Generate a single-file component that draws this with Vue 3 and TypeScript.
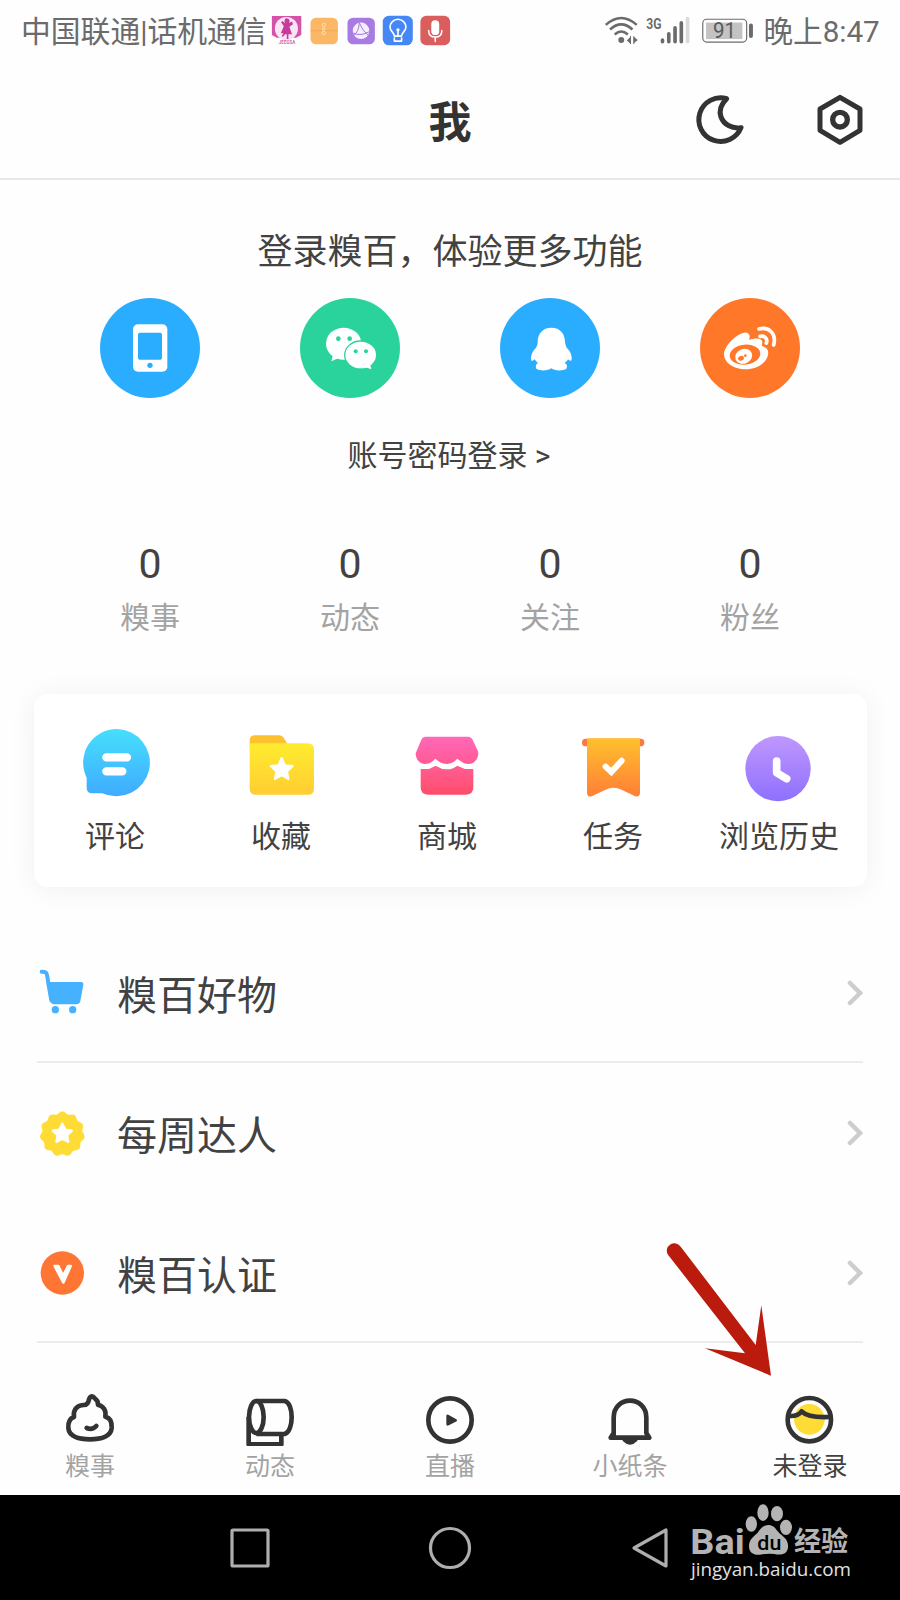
<script setup lang="ts">
interface Stat {
  label: string
  count: number
}

const stats: Stat[] = [
  { label: '糗事', count: 0 },
  { label: '动态', count: 0 },
  { label: '关注', count: 0 },
  { label: '粉丝', count: 0 },
]

// Five-pointed star centred on (cx, cy)
function star(cx: number, cy: number, outer: number, inner: number): string {
  return Array.from({ length: 10 }, (_, i) => {
    const r = i % 2 ? inner : outer
    const a = (Math.PI / 5) * i - Math.PI / 2
    return `${(cx + r * Math.cos(a)).toFixed(1)},${(cy + r * Math.sin(a)).toFixed(1)}`
  }).join(' ')
}

// Wavy-edged badge outline
function badge(cx: number, cy: number, radius: number, wave: number, lobes: number): string {
  return Array.from({ length: 180 }, (_, i) => {
    const a = (Math.PI / 90) * i
    const r = radius + wave * Math.cos(lobes * (a + Math.PI / 2))
    return `${(cx + r * Math.cos(a)).toFixed(1)},${(cy + r * Math.sin(a)).toFixed(1)}`
  }).join(' ')
}
</script>

<template>
  <main class="screen">
    <div class="status">
      <span class="carrier">中国联通|话机通信</span>
      <svg class="apps" viewBox="810 40 546 100">
        <path d="M813 46H902V104L886 112H828L813 104Z" fill="#d453a8" />
        <circle cx="857" cy="84" r="35" fill="#f9e4f4" />
        <path d="M857 53c9 0 12 9 8 14l9-4 3 8-11 8 8 22h-11v15h-5v-15h-5l-7 9-3-3 5-9h-8l9-21-8-12 4-4 9 7c-5-7-2-15 3-15z" fill="#c63c9c" />
        <text x="834" y="130" font-size="15" font-weight="700" fill="#d865b3" textLength="50" lengthAdjust="spacingAndGlyphs">JEEGSA</text>
        <rect x="930" y="51" width="83" height="81" rx="17" fill="#fbb765" />
        <path d="M930 91H1013" stroke="#e9a65a" stroke-width="2" />
        <g fill="none" stroke="#fde0b9" stroke-width="3"><circle cx="970" cy="73" r="5" /><circle cx="970" cy="85" r="4" /><circle cx="970" cy="97" r="5" /></g>
        <rect x="1042" y="51" width="83" height="81" rx="17" fill="#a87be4" />
        <circle cx="1083" cy="91" r="25" fill="#f5efff" />
        <g fill="none" stroke="#a078d6" stroke-width="3"><path d="M1059 98q24 10 48-4M1078 66q-2 28-16 38M1078 67q8 22 27 38" /></g>
        <rect x="1149" y="45" width="91" height="90" rx="19" fill="#4587f5" />
        <g fill="none" stroke="#fff" stroke-width="5" stroke-linecap="round" stroke-linejoin="round">
          <path d="M1184 107c0-10-13-15-13-27a24 24 0 0 1 48 0c0 12-13 17-13 27zM1184 113V122H1206V113M1195 105V91" />
        </g>
        <circle cx="1195" cy="88" r="5" fill="#fff" />
        <rect x="1263" y="45" width="90" height="90" rx="18" fill="#da5e5e" />
        <rect x="1296" y="59" width="24" height="45" rx="12" fill="#fff" />
        <path d="M1288 90q0 20 20 20t20-20M1308 110V123" fill="none" stroke="#fff" stroke-width="4.5" stroke-linecap="round" />
      </svg>
      <svg class="signals" viewBox="43 40 453 100">
        <g fill="none" stroke="#6b6b6b" stroke-width="7.500">
          <path d="M46 73q47-42 94 0M59 87q34-31 68 0M73 102q20-18 40 0" />
        </g>
        <circle cx="93" cy="119" r="9" fill="#6b6b6b" />
        <path d="M121 109v21l-11-10zM131 109l12 10-12 10z" fill="#6b6b6b" />
        <path d="M121 107v24M131 107v24" stroke="#6b6b6b" stroke-width="3" />
        <text x="169" y="84" font-size="46" font-weight="700" fill="#6b6b6b" textLength="46" lengthAdjust="spacingAndGlyphs">3G</text>
        <g stroke="#6b6b6b" stroke-width="11" stroke-linecap="round">
          <path d="M218 119V124M237 100V124M256 82V124M275 67V124" />
          <path d="M294 54V124" stroke="#dadada" />
        </g>
        <rect x="340" y="56" width="133" height="69" rx="12" fill="#fff" stroke="#6b6b6b" stroke-width="3.5" />
        <rect x="350" y="66" width="110" height="50" fill="#c3c3c3" />
        <text x="371" y="114" font-size="65" fill="#5b5b5b" textLength="70" lengthAdjust="spacingAndGlyphs">91</text>
        <rect x="480" y="69" width="12" height="44" rx="6" fill="#6b6b6b" />
      </svg>
      <span class="clock">晚上8:47</span>
    </div>

    <header class="header">
      <h1>我</h1>
      <div class="actions">
        <svg viewBox="309 279 162 162" fill="none" stroke="#333" stroke-width="15" stroke-linejoin="round">
          <path d="M410 296A65.500 65.500 0 1 0 453 383C427 387 402 375 393 351C386 332 394 312 410 296Z" />
        </svg>
        <svg viewBox="669 279 162 162" fill="none" stroke="#333" stroke-width="15" stroke-linejoin="round">
          <path d="M750 292L810 327V391L750 427L690 391V327Z" />
          <circle cx="750" cy="359" r="22" stroke-width="16" />
        </svg>
      </div>
    </header>

    <section class="login">
      <p class="invite">登录糗百，体验更多功能</p>
      <div class="providers">
        <svg viewBox="60 52 300 300">
          <circle cx="210" cy="202" r="150" fill="#2badff" />
          <rect x="159" y="131" width="103" height="142" rx="15" fill="#fff" />
          <rect x="174" y="156" width="72" height="81" rx="5" fill="#2badff" />
          <circle cx="210" cy="254" r="8" fill="#2badff" />
        </svg>
        <svg viewBox="660 52 300 300">
          <circle cx="810" cy="202" r="150" fill="#2bd39c" />
          <ellipse cx="791" cy="189" rx="53" ry="48" fill="#fff" />
          <path d="M759 223L754 242L778 231Z" fill="#fff" />
          <ellipse cx="842" cy="223" rx="50" ry="44" fill="#2bd39c" />
          <ellipse cx="842" cy="223" rx="46" ry="40" fill="#fff" />
          <path d="M852 258L874 266L869 246Z" fill="#fff" />
          <g fill="#2bd39c"><circle cx="775" cy="174" r="7" /><circle cx="809" cy="174" r="7" /><circle cx="827" cy="212" r="6" /><circle cx="858" cy="212" r="6" /></g>
        </svg>
        <svg viewBox="60 52 300 300">
          <circle cx="210" cy="202" r="150" fill="#2badff" />
          <path d="M214 141C187 141 173 160 173 184C173 192 171 196 168 201C157 212 152 225 153 236C154 243 159 241 164 236Q168 243 174 247C167 250 166 258 169 264C179 271 203 271 214 263C225 271 249 271 259 264C263 257 261 250 254 247Q261 243 264 236C270 242 275 242 275 235C276 223 270 210 260 201C258 197 256 192 255 184C255 160 241 141 214 141Z" fill="#fff" />
        </svg>
        <svg viewBox="660 52 300 300">
          <circle cx="810" cy="202" r="150" fill="#ff7829" />
          <path d="M732 221C732 196 768 160 793 156C808 154 812 166 807 178C825 172 846 171 847 185C847 192 844 196 848 197C860 200 867 209 864 223C859 248 829 266 796 266C760 266 732 246 732 221Z" fill="#fff" />
          <ellipse cx="795" cy="222" rx="46" ry="30" transform="rotate(-6 795 222)" fill="#ff7829" />
          <ellipse cx="791" cy="227" rx="26" ry="22" transform="rotate(-20 791 227)" fill="#fff" />
          <ellipse cx="783" cy="233" rx="9" ry="7" transform="rotate(-20 783 233)" fill="#ff7829" />
          <circle cx="796" cy="225" r="4" fill="#ff7829" />
          <path d="M837 145C868 137 890 160 881 193M840 167C854 164 864 174 859 187" fill="none" stroke="#fff" stroke-width="11" stroke-linecap="round" />
        </svg>
      </div>
      <a class="password">账号密码登录 &gt;</a>
    </section>

    <section class="stats">
      <div v-for="stat in stats" :key="stat.label" class="stat">
        <strong>{{ stat.count }}</strong>
        <span>{{ stat.label }}</span>
      </div>
    </section>

    <section class="card">
      <div class="tool">
        <svg viewBox="180 140 216 228">
          <defs><linearGradient id="g-comment" x1="0" y1="0" x2="0" y2="1"><stop offset="0" stop-color="#46dffc" /><stop offset="1" stop-color="#3fabff" /></linearGradient></defs>
          <path d="M294 146A101 101 0 1 1 250 339H220Q203 339 203 322V292A101 101 0 0 1 294 146Z" fill="url(#g-comment)" />
          <path d="M262 231H324M262 273H310" stroke="#fff" stroke-width="25" stroke-linecap="round" />
        </svg>
        <span>评论</span>
      </div>
      <div class="tool">
        <svg viewBox="678 140 216 228">
          <defs><linearGradient id="g-folder" x1="0" y1="0" x2="0" y2="1"><stop offset="0" stop-color="#ffec2f" /><stop offset="1" stop-color="#ffcd32" /></linearGradient></defs>
          <path d="M692 200V181Q692 165 708 165H780Q788 165 793 171L806 192V200Z" fill="#fdc02f" />
          <path d="M692 189H865Q885 189 885 208V325Q885 343 866 343H711Q692 343 692 325Z" fill="url(#g-folder)" />
          <polygon :points="star(788, 268, 34, 16)" fill="#fff" stroke="#fff" stroke-width="7" stroke-linejoin="round" />
        </svg>
        <span>收藏</span>
      </div>
      <div class="tool">
        <svg viewBox="1176 140 216 228">
          <defs>
            <linearGradient id="g-awning" x1="0" y1="0" x2="0" y2="1"><stop offset="0" stop-color="#ff69b7" /><stop offset="1" stop-color="#ff5a96" /></linearGradient>
            <linearGradient id="g-shop" x1="0" y1="0" x2="0" y2="1"><stop offset="0" stop-color="#ff5e93" /><stop offset="1" stop-color="#ff4c6a" /></linearGradient>
          </defs>
          <path d="M1205 266H1230L1250 256Q1267 267 1284 267T1315 256L1338 266H1363V321Q1363 343 1341 343H1227Q1205 343 1205 321Z" fill="url(#g-shop)" />
          <path d="M1220 169H1348Q1356 169 1360 177L1378 215C1379 238 1364 251 1349 251C1334 251 1325 242 1315 235Q1300 251 1283 251T1249 235C1240 244 1232 251 1218 251C1203 251 1190 238 1190 219L1207 178Q1211 169 1220 169Z" fill="url(#g-awning)" />
        </svg>
        <span>商城</span>
      </div>
      <div class="tool">
        <svg viewBox="414 140 216 228">
          <defs><linearGradient id="g-task" x1="0" y1="0" x2="0" y2="1"><stop offset="0" stop-color="#ffc02e" /><stop offset="1" stop-color="#ff7f36" /></linearGradient></defs>
          <rect x="429" y="175" width="187" height="23" rx="11" fill="#fb793d" />
          <path d="M444 174H603V336Q603 353 587 347Q564 336 549 329Q523 316 498 329Q483 336 460 347Q444 353 444 336Z" fill="url(#g-task)" />
          <path d="M500 259L517 275L548 241" fill="none" stroke="#fff" stroke-width="18" stroke-linecap="round" stroke-linejoin="miter" />
        </svg>
        <span>任务</span>
      </div>
      <div class="tool">
        <svg viewBox="912 140 216 228">
          <defs><linearGradient id="g-history" x1="0" y1="0" x2="0" y2="1"><stop offset="0" stop-color="#bf97fe" /><stop offset="1" stop-color="#8e70fd" /></linearGradient></defs>
          <circle cx="1017" cy="265" r="98" fill="url(#g-history)" />
          <path d="M1013 242V277L1043 295" fill="none" stroke="#fff" stroke-width="23" stroke-linecap="round" stroke-linejoin="round" />
        </svg>
        <span>浏览历史</span>
      </div>
    </section>

    <ul class="list">
      <li class="row ruled">
        <svg class="glyph" viewBox="51 84 144 144">
          <path d="M65 92C83 91 80 97 85 127L94 178" fill="none" stroke="#45b1ff" stroke-width="12" stroke-linecap="round" />
          <path d="M84 123H183Q191 123 190 131L181 180Q179 190 169 190H102Q93 190 92 181Z" fill="#45b1ff" />
          <circle cx="106" cy="206" r="11" fill="#45b1ff" /><circle cx="158" cy="206" r="11" fill="#45b1ff" />
        </svg>
        <span>糗百好物</span>
        <svg class="chevron" viewBox="0 0 16 26"><path d="M3 3L13 13L3 23" /></svg>
      </li>
      <li class="row">
        <svg class="glyph" viewBox="51 506 144 144">
          <polygon :points="badge(127, 581, 64, 3.500, 11)" fill="#ffdb35" />
          <polygon :points="star(127, 580, 30, 15)" fill="#fff" stroke="#fff" stroke-width="7" stroke-linejoin="round" />
        </svg>
        <span>每周达人</span>
        <svg class="chevron" viewBox="0 0 16 26"><path d="M3 3L13 13L3 23" /></svg>
      </li>
      <li class="row ruled">
        <svg class="glyph" viewBox="51 925 144 144">
          <circle cx="127" cy="997" r="65" fill="#ff7533" />
          <path d="M104 976H115L129 1006L144 976H152L130 1025Z" fill="#fff" stroke="#fff" stroke-width="8" stroke-linejoin="round" />
        </svg>
        <span>糗百认证</span>
        <svg class="chevron" viewBox="0 0 16 26"><path d="M3 3L13 13L3 23" /></svg>
      </li>
    </ul>

    <nav class="tabs">
      <div class="tab">
        <svg viewBox="69 35 162 162">
          <path d="M147 57Q154 40 165 55Q175 62 174 73C191 77 199 91 196 109C210 112 216 125 215 143C213 168 183 177 150 177S87 168 85 143C84 127 90 114 102 110C99 90 109 75 130 74Q144 75 147 57Z" />
          <path d="M140 143Q157 150 169 137" stroke-linecap="round" />
        </svg>
        <span>糗事</span>
      </div>
      <div class="tab">
        <svg viewBox="609 35 162 162">
          <ellipse cx="649" cy="110" rx="22" ry="48" />
          <path d="M649 62H734C762 67 762 153 734 161H649M626 110V192H724V163" />
        </svg>
        <span>动态</span>
      </div>
      <div class="tab">
        <svg viewBox="1149 35 162 162">
          <circle cx="1230" cy="119" r="65" />
          <path class="solid" d="M1223 107V132L1247 120Z" />
        </svg>
        <span>直播</span>
      </div>
      <div class="tab">
        <svg viewBox="-81 35 162 162">
          <path d="M-49 164V112C-49 44 49 44 49 112V158L58 172H-58L-49 158M-16 178Q0 194 16 178" stroke-linecap="round" />
        </svg>
        <span>小纸条</span>
      </div>
      <div class="tab active">
        <svg viewBox="429 515 162 162">
          <circle cx="508" cy="597" r="46" fill="#ffdb35" stroke="none" />
          <circle cx="508" cy="598" r="65" />
          <path d="M450 587Q474 588 485 573Q504 593 568 590" />
        </svg>
        <span>未登录</span>
      </div>
    </nav>

    <footer class="system">
      <svg viewBox="-30 -30 60 60"><rect x="-18" y="-18" width="36" height="36" rx="1" /></svg>
      <svg viewBox="-30 -30 60 60"><circle r="19.500" /></svg>
      <svg viewBox="-30 -30 60 60"><path d="M-16 0L16 -18V18Z" /></svg>
    </footer>

    <svg class="pointer" viewBox="0 0 110 140">
      <path d="M20.700 11.700L95.700 110L101.300 70.300L111 140.700L45 113.300L85 118.300L8 19.800A7.500 7.500 0 0 1 20.700 11.700Z" fill="#ba1b0d" />
    </svg>

    <svg class="watermark" viewBox="390 65 490 240" fill="#b4b4b4">
      <text x="391" y="221" font-size="108" font-weight="700" textLength="163" lengthAdjust="spacingAndGlyphs">Bai</text>
      <ellipse cx="574" cy="131" rx="17" ry="23" /><ellipse cx="609" cy="97" rx="17" ry="25" />
      <ellipse cx="651" cy="100" rx="18" ry="23" /><ellipse cx="678" cy="141" rx="18" ry="23" />
      <path d="M626 134C643 134 649 150 660 160C675 172 686 181 684 202C681 223 661 225 643 221Q625 219 607 222C585 227 567 220 567 198C567 177 581 169 593 157C603 145 609 134 626 134Z" />
      <text x="592" y="210" font-size="62" font-weight="500" fill="#000" textLength="72" lengthAdjust="spacingAndGlyphs">du</text>
      <text class="cjk" x="702" y="213" font-size="82" font-weight="700" textLength="163" lengthAdjust="spacingAndGlyphs">经验</text>
      <text class="site" x="393" y="286" font-size="57" fill="#e2e2e2" textLength="480" lengthAdjust="spacingAndGlyphs">jingyan.baidu.com</text>
    </svg>
  </main>
</template>

<style>
body {
  margin: 0;
  background: #fefefe;
}
</style>

<style scoped>
.screen {
  position: relative;
  display: flex;
  flex-direction: column;
  width: 900px;
  height: 1600px;
  overflow: hidden;
  background: #fefefe;
  color: #424242;
  font-family: Roboto, 'Noto Sans CJK SC', sans-serif;
}

svg {
  display: block;
  flex: none;
}

.status {
  display: flex;
  align-items: center;
  box-sizing: border-box;
  height: 60px;
  padding-left: 21px;
  color: #6b6b6b;
  font-size: 30px;
  line-height: 58px;
  white-space: nowrap;
}

.carrier {
  width: 249px;
  padding-top: 3px;
  font-size: 29.8px;
}

.apps {
  width: 182px;
  height: 33px;
}

.signals {
  width: 151px;
  height: 33px;
  margin-left: 152px;
}

.clock {
  margin-left: 8.5px;
  padding-top: 3px;
  font-size: 29.6px;
}

.header {
  display: grid;
  grid-template-columns: 1fr auto 1fr;
  align-items: center;
  box-sizing: border-box;
  height: 120px;
  padding: 0 33px;
  border-bottom: 2px solid #e8e8e8;
}

h1 {
  grid-column: 2;
  margin: 0;
  padding-top: 8px;
  color: #333;
  font-size: 43px;
  font-weight: 700;
  line-height: 60px;
}

.actions {
  display: flex;
  justify-content: flex-end;
  gap: 66px;
  padding-top: 2px;
}

.actions svg {
  width: 54px;
  height: 54px;
}

.login {
  display: flex;
  flex-direction: column;
  align-items: center;
  height: 350px;
}

.invite {
  margin: 48px 0 20px;
  font-size: 35px;
  line-height: 50px;
}

.providers {
  display: flex;
  gap: 100px;
}

.providers svg {
  width: 100px;
  height: 100px;
}

.password {
  margin-top: 33px;
  padding-right: 2px;
  font-size: 30px;
  line-height: 50px;
}

.stats {
  display: grid;
  grid-template-columns: repeat(4, 200px);
  justify-content: center;
  height: 163.5px;
}

.stat {
  display: flex;
  flex-direction: column;
  align-items: center;
}

.stat strong {
  margin-top: 9px;
  font-size: 41px;
  font-weight: 400;
  line-height: 50px;
}

.stat span {
  margin-top: 4px;
  color: #a3a3a3;
  font-size: 30px;
  line-height: 50px;
}

.card {
  display: grid;
  grid-template-columns: repeat(5, 166px);
  box-sizing: border-box;
  width: 833px;
  height: 193px;
  margin: 0 0 36.5px 33.5px;
  padding-top: 33px;
  border-radius: 14px;
  background: #fff;
  box-shadow: 0 2px 28px rgba(0, 0, 0, 0.06);
}

.tool {
  display: flex;
  flex-direction: column;
  align-items: center;
  margin-left: -1.5px;
  margin-right: 1.5px;
}

.tool svg {
  width: 72px;
  height: 76px;
}

.tool span {
  margin-top: 9px;
  font-size: 30px;
  line-height: 50px;
  white-space: nowrap;
}

.list {
  margin: 0;
  padding: 0 37px;
  list-style: none;
}

.row {
  display: flex;
  align-items: center;
  gap: 32px;
  box-sizing: border-box;
  height: 140px;
  padding-top: 2px;
  border-bottom: 2px solid transparent;
  font-size: 40px;
}

.ruled {
  border-color: #ececec;
}

.glyph {
  width: 48px;
  height: 48px;
}

.chevron {
  width: 16px;
  height: 26px;
  margin-left: auto;
  fill: none;
  stroke: #cdcdcd;
  stroke-width: 4.5px;
  stroke-linecap: round;
}

.tabs {
  display: grid;
  grid-template-columns: repeat(5, 1fr);
  height: 152px;
}

.tab {
  display: flex;
  flex-direction: column;
  align-items: center;
  padding-top: 49px;
  color: #a3a3a3;
  font-size: 25px;
  line-height: 41px;
}

.tab svg {
  width: 54px;
  height: 54px;
  fill: none;
  stroke: #333;
  stroke-width: 14px;
  stroke-linejoin: round;
}

.tab svg .solid {
  fill: #333;
  stroke-width: 8px;
}

.tab.active {
  color: #424242;
}

.system {
  display: flex;
  align-items: center;
  justify-content: center;
  gap: 140px;
  height: 105px;
  background: #000;
}

.system svg {
  width: 60px;
  height: 60px;
  fill: none;
  stroke: #aeaeae;
  stroke-width: 3.2px;
  stroke-linejoin: round;
}

.pointer {
  position: absolute;
  left: 660px;
  top: 1235px;
  width: 110px;
  height: 140px;
  overflow: visible;
}

.watermark {
  position: absolute;
  left: 690px;
  top: 1501.7px;
  width: 163.3px;
  height: 80px;
}

.watermark .cjk {
  font-family: 'Noto Sans CJK SC', sans-serif;
}

.watermark .site {
  font-family: 'Open Sans', sans-serif;
}
</style>
